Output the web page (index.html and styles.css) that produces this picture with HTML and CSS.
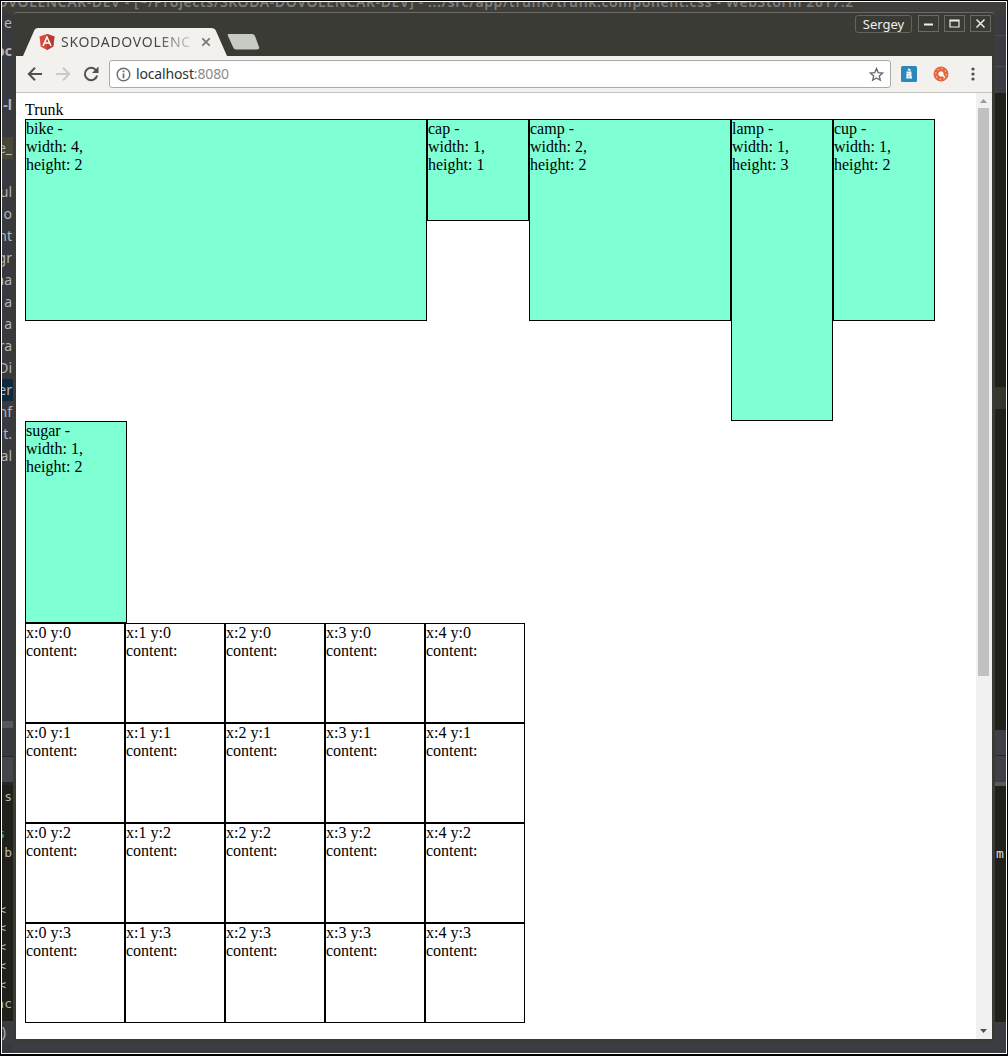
FILE: index.html
```html
<!DOCTYPE html>
<html lang="en">
<head>
<meta charset="utf-8">
<title>SKODADOVOLENCAR</title>
<link rel="stylesheet" href="styles.css">
</head>
<body>
<div class="desktop">
  <div class="editor-title">DOVOLENCAR-DEV - [~/Projects/SKODA-DOVOLENCAR-DEV] - .../src/app/trunk/trunk.component.css - WebStorm 2017.2</div>
  <div class="editor">
    <div class="gutter gutter-left">
      <div class="line first">e</div>
      <div class="line bold gap-6">oc</div>
      <div class="line bold gap-32">-l</div>
      <div class="line gap-21 marked">e_</div>
      <div class="line gap-22">ul</div>
      <div class="line">o</div>
      <div class="line">nt</div>
      <div class="line">gr</div>
      <div class="line">na</div>
      <div class="line">a</div>
      <div class="line">a</div>
      <div class="line">ra</div>
      <div class="line">Di</div>
      <div class="line selected">er</div>
      <div class="line">nf</div>
      <div class="line">t.</div>
      <div class="line">al</div>
      <div class="panel-bars"></div>
      <div class="terminal">
        <div class="line">s</div>
        <div class="line green">s</div>
        <div class="line">b</div>
        <div class="line prompt gap-38">&lt;</div>
        <div class="line prompt">&lt;</div>
        <div class="line prompt">&lt;</div>
        <div class="line prompt">&lt;</div>
        <div class="line prompt">&lt;</div>
        <div class="line">nc</div>
      </div>
      <div class="line status">)</div>
    </div>
    <div class="gutter gutter-right">
      <div class="tool-strip"></div>
      <div class="code-strip"></div>
      <div class="caret-row"></div>
      <div class="code-strip tall"></div>
      <div class="bar-strip"></div>
      <div class="code-strip term">m:</div>
    </div>
  </div>

  <div class="window">
    <div class="titlebar">
      <div class="tabs">
        <div class="tab">
          <svg class="tab-shape" width="213" height="28" viewBox="0 0 213 28"><path d="M6 28L17 3Q18 0 21 0H194Q198 0 199 3L210 28Z" fill="#f2f1ee"/></svg>
          <div class="tab-content">
            <svg width="16" height="16" viewBox="0 0 16 16"><path d="M8 0L15.5 2.6 14.3 12.4 8 16 1.7 12.4.5 2.6Z" fill="#d84a40"/><path d="M8 0L15.5 2.6 14.3 12.4 8 16Z" fill="#b93a33"/><path d="M4 12L8 3 12 12M5.7 9H10.3" fill="none" stroke="#fff" stroke-width="1.5"/></svg>
            <span class="tab-title">SKODADOVOLENC</span>
            <svg width="10" height="10" viewBox="0 0 10 10"><path d="M1.3 1.3L8.7 8.7M8.7 1.3L1.3 8.7" stroke="#777" stroke-width="1.7"/></svg>
          </div>
        </div>
        <svg class="new-tab" width="33" height="16" viewBox="0 0 33 16"><path d="M2 0H25Q27 0 28 2L32 13Q33 15.500 30 15.500H9Q7 15.500 6 13L1 2Q0 0 2 0Z" fill="#c8cac5"/></svg>
      </div>
      <div class="controls">
        <span class="user">Sergey</span>
        <span class="control"><svg width="19" height="13" viewBox="0 0 19 13"><path d="M5 7.500H14" stroke="#eee" stroke-width="2"/></svg></span>
        <span class="control"><svg width="19" height="13" viewBox="0 0 19 13"><path d="M5 3H14V10H5ZM5 4H14" fill="none" stroke="#eee" stroke-width="1.2"/></svg></span>
        <span class="control"><svg width="19" height="13" viewBox="0 0 19 13"><path d="M5.500 2.500L13.500 10.500M13.500 2.500L5.500 10.500" stroke="#eee" stroke-width="1.5"/></svg></span>
      </div>
    </div>

    <div class="toolbar">
      <svg class="back" width="16" height="16" viewBox="0 0 16 16"><path d="M15 8H2M8 1.800L1.800 8 8 14.200" fill="none" stroke="#505050" stroke-width="2"/></svg>
      <svg class="forward" width="16" height="16" viewBox="0 0 16 16"><path d="M1 8H14M8 1.800L14.200 8 8 14.200" fill="none" stroke="#c9c9c8" stroke-width="2"/></svg>
      <svg class="reload" width="16" height="16" viewBox="0 0 16 16"><path d="M13 4.200A6.200 6.200 0 1 0 14.100 9.500" fill="none" stroke="#505050" stroke-width="2"/><path d="M15.500 .5V7H9Z" fill="#505050"/></svg>
      <div class="address">
        <svg width="15" height="15" viewBox="0 0 15 15"><circle cx="7.5" cy="7.5" r="6.3" fill="none" stroke="#6b6b6b" stroke-width="1.4"/><path d="M7.500 6.500V11.200M7.500 3.600V5.300" stroke="#6b6b6b" stroke-width="1.7"/></svg>
        <span class="url">localhost<span class="port">:8080</span></span>
        <svg class="star" width="15" height="15" viewBox="0 0 15 15"><path d="M7.500 1.500L9.200 5.600 13.700 6 10.300 8.900 11.300 13.200 7.500 10.900 3.700 13.200 4.700 8.900 1.300 6 5.800 5.600Z" fill="none" stroke="#666" stroke-width="1.3"/></svg>
      </div>
      <svg class="ext-blue" width="16" height="16" viewBox="0 0 16 16"><rect width="16" height="16" rx="1.5" fill="#2f86ba"/><path d="M7 3.200L9.500 4.500M5.500 6.500H9.500V12M9.500 8.800H6.300V11.500H11" fill="none" stroke="#eef7fb" stroke-width="1.9"/></svg>
      <svg class="ext-red" width="16" height="16" viewBox="0 0 16 16"><circle cx="8" cy="8" r="5" fill="none" stroke="#e5683c" stroke-width="5"/><circle cx="8" cy="8" r="5.3" fill="none" stroke="#f6bda2" stroke-width="1.2" stroke-dasharray="1.5 2.6"/><circle cx="8" cy="8" r="2.4" fill="#fff"/><path d="M8 8L12 11.500" stroke="#fff" stroke-width="1.4"/></svg>
      <svg class="menu" width="4" height="14" viewBox="0 0 4 14"><circle cx="2" cy="2" r="1.6" fill="#4d4d4d"/><circle cx="2" cy="7" r="1.6" fill="#4d4d4d"/><circle cx="2" cy="12" r="1.6" fill="#4d4d4d"/></svg>
    </div>

    <div class="viewport">
      <div class="page">
        <div>Trunk</div>
        <div class="items">
          <div class="item w4 h2">bike -<br>width: 4,<br>height: 2</div>
          <div class="item w1 h1">cap -<br>width: 1,<br>height: 1</div>
          <div class="item w2 h2">camp -<br>width: 2,<br>height: 2</div>
          <div class="item w1 h3">lamp -<br>width: 1,<br>height: 3</div>
          <div class="item w1 h2">cup -<br>width: 1,<br>height: 2</div>
          <div class="item w1 h2">sugar -<br>width: 1,<br>height: 2</div>
        </div>
        <div class="trunk">
          <div class="cell">x:0 y:0<br>content:</div>
          <div class="cell">x:1 y:0<br>content:</div>
          <div class="cell">x:2 y:0<br>content:</div>
          <div class="cell">x:3 y:0<br>content:</div>
          <div class="cell">x:4 y:0<br>content:</div>
          <div class="cell">x:0 y:1<br>content:</div>
          <div class="cell">x:1 y:1<br>content:</div>
          <div class="cell">x:2 y:1<br>content:</div>
          <div class="cell">x:3 y:1<br>content:</div>
          <div class="cell">x:4 y:1<br>content:</div>
          <div class="cell">x:0 y:2<br>content:</div>
          <div class="cell">x:1 y:2<br>content:</div>
          <div class="cell">x:2 y:2<br>content:</div>
          <div class="cell">x:3 y:2<br>content:</div>
          <div class="cell">x:4 y:2<br>content:</div>
          <div class="cell">x:0 y:3<br>content:</div>
          <div class="cell">x:1 y:3<br>content:</div>
          <div class="cell">x:2 y:3<br>content:</div>
          <div class="cell">x:3 y:3<br>content:</div>
          <div class="cell">x:4 y:3<br>content:</div>
        </div>
      </div>
      <div class="scrollbar">
        <svg width="15" height="15" viewBox="0 0 15 15"><path d="M4 10L7.500 6 11 10Z" fill="#999"/></svg>
        <div class="thumb"></div>
        <svg class="down" width="15" height="15" viewBox="0 0 15 15"><path d="M4 5H11L7.500 9Z" fill="#505050"/></svg>
      </div>
    </div>
  </div>
</div>
</body>
</html>
```
FILE: styles.css
```css
* { box-sizing: border-box; }
body { margin: 0; background: #000; }
svg { display: block; flex: none; }

.desktop {
  position: relative;
  width: 1006px;
  height: 1053px;
  margin: 1px 0 0 1px;
  border: 1px solid #fff;
  background: #3c3d42;
  overflow: hidden;
  font-family: "Noto Sans", sans-serif;
}
.editor-title {
  height: 11px;
  overflow: hidden;
  background: #3f3e3a;
  color: #807e79;
  font-size: 14px;
  font-weight: 600;
  line-height: 0;
  white-space: nowrap;
  text-indent: -16px;
  letter-spacing: 0.6px;
}
.editor { display: flex; justify-content: space-between; height: 1040px; }

.gutter { width: 11px; display: flex; flex-direction: column; overflow: hidden; color: #b4b4b4; font-size: 14px; }
.gutter-left { background: #393a40; }
.line { height: 22px; flex: none; line-height: 22px; display: flex; justify-content: flex-end; white-space: nowrap; padding-right: 1px; }
.first { margin-top: -1px; }
.bold { font-weight: 700; }
.gap-6 { margin-top: 6px; }
.gap-32 { margin-top: 32px; }
.gap-21 { margin-top: 21px; }
.gap-22 { margin-top: 22px; }
.gap-38 { margin-top: 38px; }
.marked { background: #49473a; }
.selected { background: #0d293e; }
.panel-bars {
  flex: none;
  height: 318px;
  background: linear-gradient(#393a40 254px, #55575c 254px 261px, #393a40 261px 289px, #27282b 289px 290px, #45464a 290px 315px, #27282b 315px);
}
.terminal { flex: none; height: 237px; background: #20211b; font-family: "DejaVu Sans Mono", monospace; font-size: 13px; }
.terminal .line { height: 18.8px; line-height: 20px; }
.terminal .line:first-child { margin-top: 2px; }
.terminal .green { color: #56b35a; margin-top: 18px; height: 19px; padding-right: 8px; }
.terminal .prompt { padding-right: 7px; }
.line.status { margin-top: -1px; padding-right: 7px; background: #3c3d42; }

.gutter-right { background: #20211b; }
.tool-strip { height: 80px; background: linear-gradient(#3b3c44 22px, #4a4c58 22px 23px, #3b3c44 23px 53px, #4a4c58 53px 54px, #3b3c44 54px); }
.code-strip { height: 294px; background: #20211b; }
.caret-row { height: 22px; background: #36362c; }
.code-strip.tall { height: 321px; }
.bar-strip { height: 56px; background: linear-gradient(#3f4048 25px, #28282d 25px 26px, #3f4048 26px 52px, #5a5a5a 52px); }
.code-strip.term { height: 236px; padding: 59px 0 0 1px; color: #ddd; font: 13px/18px "DejaVu Sans Mono", monospace; }
.gutter-right::after { content: ""; flex: 1; background: #3c3d42; }

.window {
  position: absolute;
  left: 11px;
  top: 10px;
  width: 982px;
  height: 1029px;
  padding: 0 3px 2px;
  background: #3b3b35;
  border-top: 1px solid #6c6b66;
  border-radius: 4px 4px 0 0;
  display: flex;
  flex-direction: column;
}
.titlebar { height: 43px; flex: none; display: flex; justify-content: space-between; align-items: flex-start; }
.tabs { display: flex; align-items: flex-end; height: 43px; padding-left: 1px; }
.tab { position: relative; width: 210px; height: 28px; }
.tab-shape { position: absolute; left: 0; top: 0; }
.tab-content { position: relative; display: flex; align-items: center; height: 28px; padding-left: 22px; }
.tab-title {
  width: 140px;
  margin-left: 6px;
  font-size: 14px;
  line-height: 28px;
  letter-spacing: 0.7px;
  overflow: hidden;
  white-space: nowrap;
  color: transparent;
  background: linear-gradient(90deg, #444 95px, rgba(68, 68, 68, 0.15) 132px);
  background-clip: text;
  -webkit-background-clip: text;
}
.new-tab { margin: 0 0 6px; }
.controls { display: flex; gap: 5px; padding: 2px 1px 0 0; }
.user { width: 57px; height: 18px; border: 1px solid #64645d; border-radius: 3px; color: #f0f0ee; font-size: 13px; line-height: 17px; text-align: center; margin-right: 1px; }
.control { width: 21px; height: 17px; border: 1px solid #6a6a63; display: flex; align-items: center; justify-content: center; }

.toolbar { height: 37px; flex: none; display: flex; align-items: center; background: #f2f1ee; border-bottom: 1px solid #c4c4c2; padding: 0 0 0 11px; }
.forward { margin-left: 12px; }
.reload { margin-left: 12px; }
.address { width: 782px; height: 28px; margin-left: 10px; padding: 0 6px; border: 1px solid #aaa9a7; border-radius: 3px; background: #fff; display: flex; align-items: center; }
.url { flex: 1; margin-left: 5px; color: #2d3330; font-size: 14px; line-height: 26px; letter-spacing: -0.15px; }
.port { color: #8c8c8c; }
.ext-blue { margin-left: 10px; }
.ext-red { margin-left: 16px; }
.menu { margin-left: 22px; }

.viewport { flex: 1; min-height: 0; display: flex; background: #fff; }
.page { flex: 1; padding: 8px 0 0 9px; font: 16px/18px "Liberation Serif", serif; color: #000; }
.items { display: flex; flex-wrap: wrap; align-items: flex-start; align-content: flex-start; }
.item { border: 1px solid #000; background: #7fffd4; }
.w1 { width: 102px; }
.w2 { width: 202px; }
.w4 { width: 402px; }
.h1 { height: 102px; }
.h2 { height: 202px; }
.h3 { height: 302px; }
.trunk { display: grid; grid-template-columns: repeat(5, 100px); grid-auto-rows: 100px; }
.cell { border: 1px solid #000; }

.scrollbar { width: 16px; display: flex; flex-direction: column; background: #f1f1f1; }
.thumb { width: 11px; height: 568px; margin-left: 2px; background: #c1c1c1; }
.down { margin-top: auto; }
```
